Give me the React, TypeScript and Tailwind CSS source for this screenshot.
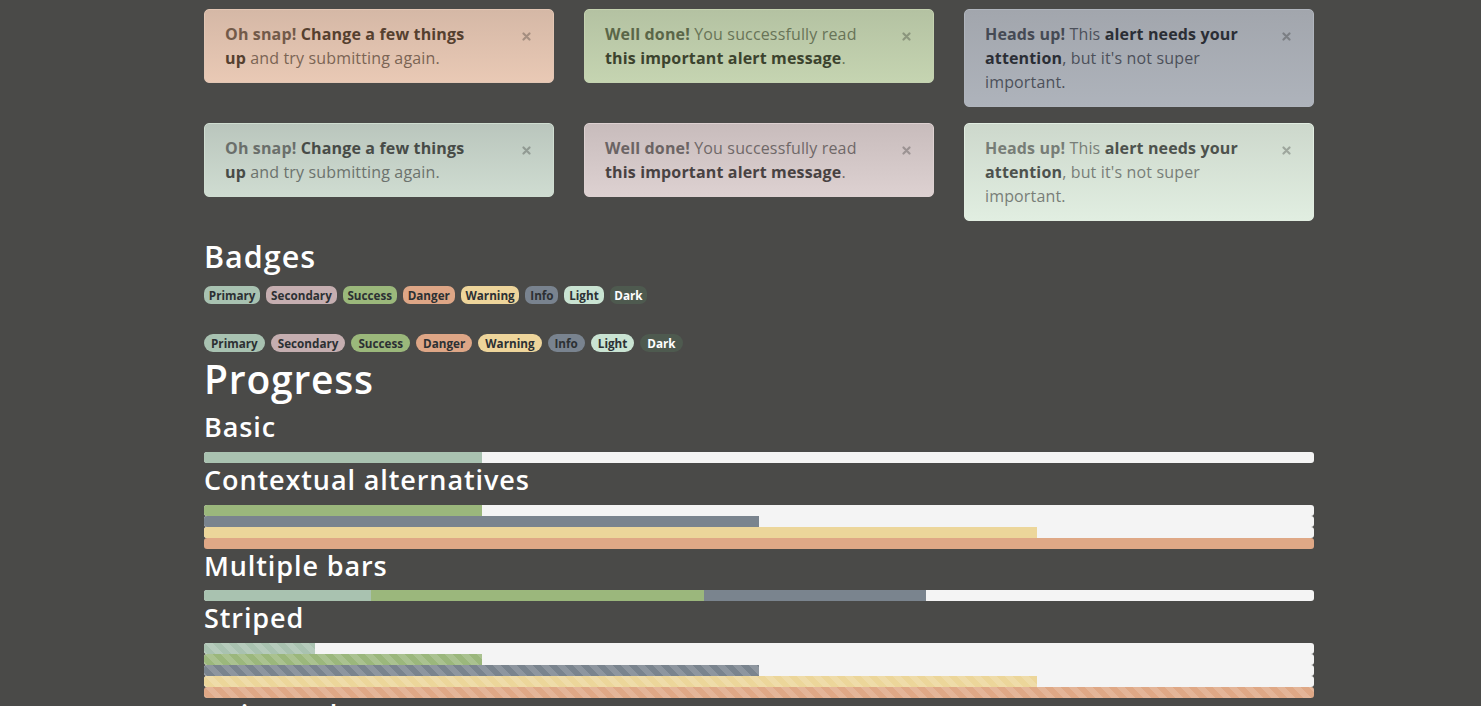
import React from "react";

const CloseX = () => (
  <svg width="9" height="9" viewBox="0 0 9 9" className="absolute right-[22px] top-[22px]">
    <path d="M1.5 1.5 L7.5 7.5 M7.5 1.5 L1.5 7.5" stroke="rgba(0,0,0,0.25)" strokeWidth="2.2" strokeLinecap="round" />
  </svg>
);

function Alert({ cls, lines }: { cls: string; lines: React.ReactNode[] }) {
  return (
    <div className={`relative rounded-[5px] border px-[20px] py-[12px] text-[16px] leading-[24px] tracking-[0.15px] ${cls}`}>
      <CloseX />
      {lines.map((l, i) => (
        <div key={i} className="whitespace-nowrap">
          {l}
        </div>
      ))}
    </div>
  );
}

const badges = [
  { name: "Primary", cls: "bg-[#a8c2b1] text-[#2c3033]" },
  { name: "Secondary", cls: "bg-[#c5aeb0] text-[#2c3033]" },
  { name: "Success", cls: "bg-[#9bb87b] text-[#2c3033]" },
  { name: "Danger", cls: "bg-[#dea686] text-[#2c3033]" },
  { name: "Warning", cls: "bg-[#eed59b] text-[#2c3033]" },
  { name: "Info", cls: "bg-[#79838f] text-[#2c3033]" },
  { name: "Light", cls: "bg-[#c9e3d2] text-[#2c3033]" },
  { name: "Dark", cls: "bg-[#4e5a4f] text-white" },
];

const stripe =
  "bg-[linear-gradient(45deg,rgba(255,255,255,.15)_25%,transparent_25%,transparent_50%,rgba(255,255,255,.15)_50%,rgba(255,255,255,.15)_75%,transparent_75%,transparent)] bg-[length:16px_16px]";

const C = {
  primary: "bg-[#a9c2b0]",
  success: "bg-[#9bb77c]",
  info: "bg-[#7a848e]",
  warning: "bg-[#ecd69a]",
  danger: "bg-[#dfa886]",
};

function Progress({ bars }: { bars: { w: number; cls: string; striped?: boolean }[] }) {
  return (
    <div className="flex h-[11px] w-full overflow-hidden rounded-[3px] bg-[#f4f4f4]">
      {bars.map((b, i) => (
        <div key={i} className={`h-full ${b.cls} ${b.striped ? stripe : ""}`} style={{ width: `${b.w}%` }} />
      ))}
    </div>
  );
}

const H3 = ({ children }: { children: React.ReactNode }) => (
  <h3 className="mb-[8px] text-[27px] font-semibold leading-[33.6px] tracking-[0.9px] text-white">{children}</h3>
);

export default function App() {
  return (
    <div className="min-h-screen w-full bg-[#4a4a48] pt-[9px] font-['Open_Sans',sans-serif]">
      <div className="ml-[204px] w-[1110px]">
        <div className="grid grid-cols-3 items-start gap-x-[30px] gap-y-[16px]">
          <Alert
            cls="border-[#e2c6b4] bg-[linear-gradient(to_bottom,#d5b8a6,#e9c9b5)] text-[#7b6454]"
            lines={[
              <>
                <b className="font-bold text-[#725a49]">Oh snap!</b>{" "}
                <b className="font-bold text-[#55402f]">Change a few things</b>
              </>,
              <>
                <b className="font-bold text-[#55402f]">up</b> and try submitting again.
              </>,
            ]}
          />
          <Alert
            cls="border-[#c4d2b0] bg-[linear-gradient(to_bottom,#b4c2a2,#c5d4b1)] text-[#687457]"
            lines={[
              <>
                <b className="font-bold text-[#5a6648]">Well done!</b> You successfully read
              </>,
              <>
                <b className="font-bold text-[#3c432e]">this important alert message</b>.
              </>,
            ]}
          />
          <Alert
            cls="border-[#b0b5bd] bg-[linear-gradient(to_bottom,#a2a6ad,#aeb3bb)] text-[#4c505a]"
            lines={[
              <>
                <b className="font-bold text-[#454a54]">Heads up!</b> This{" "}
                <b className="font-bold text-[#2b2e35]">alert needs your</b>
              </>,
              <>
                <b className="font-bold text-[#2b2e35]">attention</b>, but it's not super
              </>,
              <>important.</>,
            ]}
          />
          <Alert
            cls="border-[#cfddd1] bg-[linear-gradient(to_bottom,#bac6bd,#cfdcd1)] text-[#6c726d]"
            lines={[
              <>
                <b className="font-bold text-[#6a6f6b]">Oh snap!</b>{" "}
                <b className="font-bold text-[#474b47]">Change a few things</b>
              </>,
              <>
                <b className="font-bold text-[#474b47]">up</b> and try submitting again.
              </>,
            ]}
          />
          <Alert
            cls="border-[#ddd1d1] bg-[linear-gradient(to_bottom,#c8bcbc,#ddd1d1)] text-[#6f6868]"
            lines={[
              <>
                <b className="font-bold text-[#6b6464]">Well done!</b> You successfully read
              </>,
              <>
                <b className="font-bold text-[#484242]">this important alert message</b>.
              </>,
            ]}
          />
          <Alert
            cls="border-[#e1ede1] bg-[linear-gradient(to_bottom,#cdd8cc,#e1eee1)] text-[#787e78]"
            lines={[
              <>
                <b className="font-bold text-[#777d77]">Heads up!</b> This{" "}
                <b className="font-bold text-[#4d524d]">alert needs your</b>
              </>,
              <>
                <b className="font-bold text-[#4d524d]">attention</b>, but it's not super
              </>,
              <>important.</>,
            ]}
          />
        </div>

        <h2 className="mb-[8px] mt-[16px] text-[30.5px] font-semibold leading-[38.4px] tracking-[1px] text-white">
          Badges
        </h2>
        <div className="flex h-[24px] items-center gap-[6px]">
          {badges.map((b) => (
            <span
              key={b.name}
              className={`flex h-[18px] items-center rounded-[7px] px-[4.8px] text-[11.7px] font-bold ${b.cls}`}
            >
              {b.name}
            </span>
          ))}
        </div>
        <div className="mt-[24px] flex h-[24px] items-center gap-[6px]">
          {badges.map((b) => (
            <span
              key={b.name}
              className={`flex h-[18px] items-center rounded-full px-[7px] text-[11.7px] font-bold ${b.cls}`}
            >
              {b.name}
            </span>
          ))}
        </div>

        <h1 className="mb-[7px] text-[39px] font-semibold leading-[48px] tracking-[0.8px] text-white">Progress</h1>
        <H3>Basic</H3>
        <Progress bars={[{ w: 25, cls: C.primary }]} />
        <H3>Contextual alternatives</H3>
        <Progress bars={[{ w: 25, cls: C.success }]} />
        <Progress bars={[{ w: 50, cls: C.info }]} />
        <Progress bars={[{ w: 75, cls: C.warning }]} />
        <Progress bars={[{ w: 100, cls: C.danger }]} />
        <H3>Multiple bars</H3>
        <Progress
          bars={[
            { w: 15, cls: C.primary },
            { w: 30, cls: C.success },
            { w: 20, cls: C.info },
          ]}
        />
        <H3>Striped</H3>
        <Progress bars={[{ w: 10, cls: C.primary, striped: true }]} />
        <Progress bars={[{ w: 25, cls: C.success, striped: true }]} />
        <Progress bars={[{ w: 50, cls: C.info, striped: true }]} />
        <Progress bars={[{ w: 75, cls: C.warning, striped: true }]} />
        <Progress bars={[{ w: 100, cls: C.danger, striped: true }]} />
        <H3>Animated</H3>
        <Progress bars={[{ w: 75, cls: C.primary, striped: true }]} />
        <div className="h-[40px]" />
      </div>
    </div>
  );
}
